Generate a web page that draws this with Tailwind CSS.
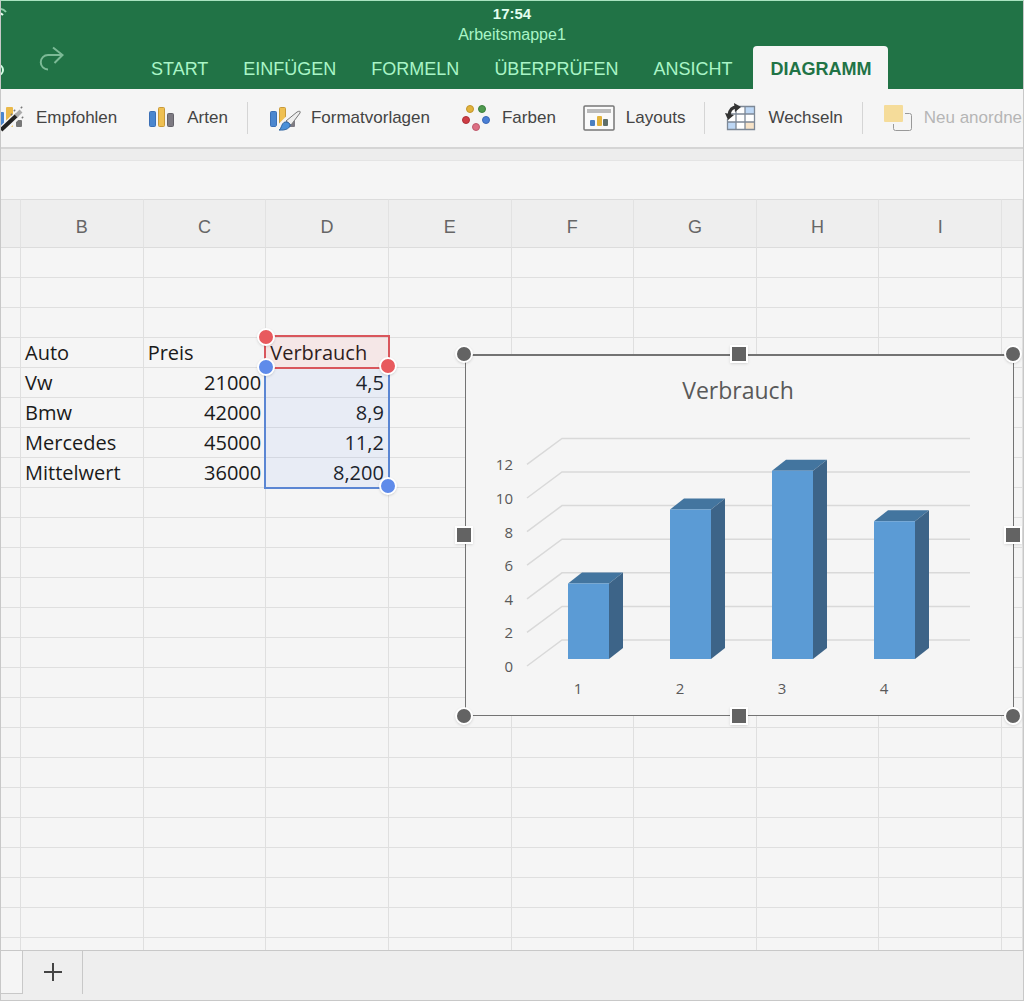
<!DOCTYPE html>
<html lang="de">
<head>
    <meta charset="UTF-8">
    <meta name="viewport" content="width=device-width, initial-scale=1.0">
    <title>Arbeitsmappe1</title>
    <script src="https://cdn.jsdelivr.net/npm/@tailwindcss/browser@4"></script>
</head>
<body class="flex h-screen flex-col overflow-hidden border border-t-[#a9e3c0] border-[#c8c8c8] bg-[#f5f5f5] font-['Liberation_Sans',Arial,sans-serif]">

  <header class="shrink-0 bg-[#217346] text-[#a9f5c6]">
    <div class="flex h-[45px]">
      <svg class="mt-1 h-4 w-3" viewBox="0 0 12 16" fill="none" stroke="#8fd0aa" stroke-width="2">
        <path d="M-5 5q6-3 10 2" />
        <path d="M-4 9q3-2 6 1" stroke="#e8fff0" />
      </svg>
      <div class="grow pt-1 pr-3 text-center">
        <p class="text-[15px] leading-[18px] font-bold text-[#e4fff0]">17:54</p>
        <h1 class="text-base leading-6">Arbeitsmappe1</h1>
      </div>
    </div>
    <div class="flex h-[43px]">
      <div class="flex w-[134px] shrink-0">
        <button type="button" class="w-9" aria-label="Rückgängig">
          <svg class="h-7 w-4" viewBox="0 0 16 28" fill="none" stroke="#d5ffe5" stroke-width="2"><path d="M-3 11a5 5 0 0 1 0 10" /></svg>
        </button>
        <button type="button" class="h-7" aria-label="Wiederholen">
          <svg class="h-7 w-7" viewBox="0 0 28 28" fill="none" stroke="#7cba96" stroke-width="2">
            <path d="M25 9H11a7 7 0 0 0 0 14.500" />
            <path d="M16 1.500l9.500 7.500-8 8" />
          </svg>
        </button>
      </div>
      <nav class="flex gap-[3px] text-lg leading-[46px]">
        <a href="#start" class="px-4">START</a>
        <a href="#einfuegen" class="px-4">EINFÜGEN</a>
        <a href="#formeln" class="px-4">FORMELN</a>
        <a href="#ueberpruefen" class="px-4">ÜBERPRÜFEN</a>
        <a href="#ansicht" class="px-4">ANSICHT</a>
        <a href="#diagramm" class="ml-0.5 rounded-t bg-[#f5f5f5] px-[17px] font-bold text-[#217346]">DIAGRAMM</a>
      </nav>
    </div>
  </header>

  <!-- ribbon -->
  <div class="flex h-[60px] shrink-0 items-center overflow-hidden border-b-2 border-[#d5d5d5] text-[17px] whitespace-nowrap text-[#444]">
    <button type="button" class="flex shrink-0 items-center gap-3">
      <svg class="h-8 w-[23px]" viewBox="0 0 23 32">
        <rect x="-3" y="10" width="6" height="15" rx="1" fill="#4a86cf" />
        <rect x="5" y="5" width="7" height="20" rx="1" fill="#eab94a" />
        <rect x="15" y="18" width="6" height="7" rx="1" fill="#777" />
        <path d="M-1 30L22 8" stroke="#f5f5f5" stroke-width="8" />
        <path d="M0 28L16 13" stroke="#222" stroke-width="4" />
        <path d="M15 14l5-5" stroke="#aaa" stroke-width="4" />
        <path d="M13 8l1 1M20 5l1 1M21 15l1 1M10 12l1 1" stroke="#777" stroke-width="2" />
      </svg>
      Empfohlen
    </button>
    <button type="button" class="ml-[30px] flex shrink-0 items-center gap-3">
      <svg class="h-8 w-7" viewBox="0 0 28 32" stroke-width="1">
        <rect x="2.500" y="9.500" width="6" height="15" rx="1" fill="#4a86cf" stroke="#3b6fb5" />
        <rect x="11.500" y="5.500" width="6" height="19" rx="1" fill="#efc052" stroke="#c99a3a" />
        <rect x="20.500" y="11.500" width="6" height="13" rx="1" fill="#7d7a82" stroke="#64626a" />
      </svg>
      Arten
    </button>
    <span class="mx-[19px] h-8 w-px shrink-0 bg-[#d5d5d5]"></span>
    <button type="button" class="flex shrink-0 items-center gap-[10px]">
      <svg class="h-8 w-[34px]" viewBox="0 0 34 32">
        <rect x="3.500" y="9.500" width="6" height="15" rx="1" fill="#4a86cf" stroke="#3b6fb5" />
        <rect x="12.500" y="5.500" width="6" height="19" rx="1" fill="#efc052" stroke="#c99a3a" />
        <rect x="22" y="12" width="6" height="13" rx="1" fill="#7d7a82" />
        <path d="M12 28L32 8" stroke="#f5f5f5" stroke-width="9" />
        <path d="M19 19L30 10q4-2 3 1L24 23z" fill="#eee" stroke="#777" />
        <path d="M12 28c3-1 2-9 8-8 6 2 3 9-8 8z" fill="#4a90d9" stroke="#2c62a0" />
      </svg>
      Formatvorlagen
    </button>
    <button type="button" class="ml-[30px] flex shrink-0 items-center gap-3">
      <svg class="h-8 w-[30px]" viewBox="0 0 30 32">
        <circle cx="10" cy="7" r="3.500" fill="#e2b33c" stroke="#c2952b" />
        <circle cx="22" cy="7" r="3.500" fill="#4f9a4f" stroke="#3c803c" />
        <circle cx="6" cy="18" r="3.500" fill="#cf3d45" stroke="#ad3038" />
        <circle cx="26" cy="18" r="3.500" fill="#4a7fd6" stroke="#3a68b5" />
        <circle cx="16" cy="25" r="3.500" fill="#dd6f83" stroke="#be5a6c" />
      </svg>
      Farben
    </button>
    <button type="button" class="ml-[26px] flex shrink-0 items-center gap-[10px]">
      <svg class="h-8 w-[34px]" viewBox="0 0 34 32">
        <rect x="2" y="4" width="30" height="24" rx="1" fill="#fafafa" stroke="#777" stroke-width="1.500" />
        <rect x="5" y="7" width="24" height="4" fill="#bbb" />
        <rect x="8" y="18" width="5" height="6" rx="1" fill="#4a7fc0" />
        <rect x="15" y="14" width="5" height="10" rx="1" fill="#e2b33c" />
        <rect x="21" y="17" width="5" height="7" rx="1" fill="#5f6f6a" />
      </svg>
      Layouts
    </button>
    <span class="mx-[19px] h-8 w-px shrink-0 bg-[#d5d5d5]"></span>
    <button type="button" class="flex shrink-0 items-center gap-3">
      <svg class="h-8 w-[32px]" viewBox="0 0 32 32">
        <rect x="3" y="4" width="28" height="24" fill="#fff" />
        <path d="M3 4h28v8H21v-8M3 20h9v8H3z" fill="#bdd7f5" />
        <path d="M21 20h10v8H21z" fill="#f7e3c8" />
        <path d="M3.500 4.500h27v23h-27zM3 12h28M3 20h28M12 4v24M21 4v24" fill="none" stroke="#7d8896" stroke-width="1.300" />
        <path d="M-1 1h12v4l-7 7v5h-5z" fill="#f5f5f5" />
        <path d="M5 13q1-8 8-8" fill="none" stroke="#333" stroke-width="3" />
        <path d="M10 1l7 4-6 5zM1 11l3 7 6-5z" fill="#333" />
      </svg>
      Wechseln
    </button>
    <span class="mx-[19px] h-8 w-px shrink-0 bg-[#d5d5d5]"></span>
    <button type="button" class="flex shrink-0 items-center gap-[10px] text-[#b5b5b5]" disabled>
      <svg class="h-8 w-8" viewBox="2 0 32 32">
        <rect x="13.500" y="11.500" width="18" height="17" rx="2" fill="none" stroke="#999" />
        <rect x="2" y="1" width="23" height="21" fill="#f5f5f5" />
        <rect x="4" y="3" width="19" height="17" rx="1" fill="#f5dc9a" />
      </svg>
      Neu anordnen
    </button>
  </div>

  <div class="h-3 shrink-0 border-b border-[#e4e4e4] bg-[#ededed]"></div>
  <div class="h-[38px] shrink-0"></div>

  <!-- sheet -->
  <main class="relative h-0 grow overflow-hidden">
    <table class="w-full table-fixed border-separate border-spacing-0 font-['Open_Sans','Noto_Sans',sans-serif] text-xl leading-[29px] text-[#1a1a1a]">
      <thead class="bg-[#eeeeee] font-['Liberation_Sans',Arial,sans-serif] text-lg text-[#666]">
        <tr id="columns"></tr>
      </thead>
      <tbody id="rows"></tbody>
    </table>

    <section class="absolute top-[155px] left-[464px] h-[362px] w-[549px] border border-t-2 border-[#737373] bg-[#f5f5f5]" aria-label="Diagramm Verbrauch">
      <svg class="h-full w-full font-['Open_Sans','Noto_Sans',sans-serif]" viewBox="0 0 547 359">
        <text x="272" y="43" text-anchor="middle" font-size="23" fill="#595959">Verbrauch</text>
        <g id="lines" fill="none" stroke="#d9d9d9" stroke-width="1.500"></g>
        <g id="bars"></g>
        <g id="labels" font-size="15" fill="#595959"></g>
      </svg>
      <div id="handles" class="absolute -top-0.5 right-0 -bottom-px -left-0.5"></div>
    </section>
  </main>

  <!-- sheet tabs -->
  <footer class="flex h-[50px] shrink-0 border-t border-[#c8c8c8] bg-[#eeeeee]">
    <div class="h-[43px] w-[22px] border-r border-b border-[#c8c8c8] bg-[#f5f5f5]"></div>
    <button type="button" class="flex h-[43px] w-[60px] items-center justify-center border-r border-[#c8c8c8]" aria-label="Neues Blatt">
      <svg class="h-5 w-5" viewBox="0 0 20 20" stroke="#444" stroke-width="2"><path d="M1 9h18M10 0v18" /></svg>
    </button>
  </footer>

  <script>
    const columns = ["", "B", "C", "D", "E", "F", "G", "H", "I", ""];
    const data = {
      3: ["Auto", "Preis", "Verbrauch"],
      4: ["Vw", "21000", "4,5"],
      5: ["Bmw", "42000", "8,9"],
      6: ["Mercedes", "45000", "11,2"],
      7: ["Mittelwert", "36000", "8,200"],
    };

    document.getElementById("columns").innerHTML = columns.map((name, i) => {
      const width = i === 0 ? "w-5" : i === 9 ? "w-[21px]" : "";
      return `<th class="h-[49px] border-t border-r border-b border-[#dcdcdc] border-r-[#e2e2e2] pt-1.5 pb-0 font-normal ${width}">${name}</th>`;
    }).join("");

    // marked ranges: series name in red, values in blue
    const redRange = `<div class="absolute -top-[3px] -left-[2px] -right-[2px] z-20 h-[34px] border-2 border-[#d9565c] bg-[#ff5050]/8">
      <i class="absolute -top-[9px] -left-[9px] size-[18px] rounded-full border-2 border-white bg-[#e85a5e] shadow"></i>
      <i class="absolute -right-[9px] -bottom-[8px] size-[18px] rounded-full border-2 border-white bg-[#e85a5e] shadow"></i></div>`;
    const blueRange = `<div class="absolute top-0 -left-[2px] -right-[2px] z-10 h-[121px] border-2 border-t-0 border-[#5b86d3] bg-[#4080ff]/7"></div>
      <i class="absolute -top-[10px] -left-[9px] z-30 size-[18px] rounded-full border-2 border-white bg-[#5f8bea] shadow"></i>
      <i class="absolute top-[109px] -right-[9px] z-30 size-[18px] rounded-full border-2 border-white bg-[#5f8bea] shadow"></i>`;

    let html = "";
    for (let r = 0; r < 60; r++) {
      html += "<tr>";
      for (let c = 0; c < 10; c++) {
        const text = data[r] && data[r][c - 1] ? data[r][c - 1] : "";
        const align = r > 3 && c > 1 ? "text-right" : "text-left";
        const marks = c === 3 && r === 3 ? redRange : c === 3 && r === 4 ? blueRange : "";
        html += `<td class="h-[30px] border-r border-b border-[#dfdfdf] px-1 py-0 ${align} ${marks ? "relative" : ""}">${text}${marks}</td>`;
      }
      html += "</tr>";
    }
    document.getElementById("rows").innerHTML = html;

    // 3D column chart
    let lines = "", labels = "", bars = "";
    for (let v = 0; v <= 12; v += 2) {
      const y = 284 - v * 16.8;
      lines += `<path d="M61 ${y + 26}L96 ${y}H504" />`;
      labels += `<text x="47" y="${y + 32}" text-anchor="end">${v}</text>`;
    }
    [4.5, 8.9, 11.2, 8.2].forEach((v, i) => {
      const x = 102 + i * 102;
      const y = 303 - v * 16.8;
      bars += `<path d="M${x} ${y}l14-11h41l-14 11z" fill="#43759f" />
        <path d="M${x + 41} ${y}l14-11V292l-14 11z" fill="#3d6488" />
        <path d="M${x} ${y}h41V303h-41z" fill="#5b9bd5" />`;
      labels += `<text x="${x + 10}" y="338" text-anchor="middle">${i + 1}</text>`;
    });
    document.getElementById("lines").innerHTML = lines;
    document.getElementById("bars").innerHTML = bars;
    document.getElementById("labels").innerHTML = labels;

    const places = [
      "left-0 top-0 rounded-full", "left-1/2 top-0", "left-full top-0 rounded-full",
      "left-0 top-1/2", "left-full top-1/2",
      "left-0 top-full rounded-full", "left-1/2 top-full", "left-full top-full rounded-full",
    ];
    document.getElementById("handles").innerHTML = places.map((place) =>
      `<i class="absolute size-[18px] -translate-1/2 border-2 border-white bg-[#636363] shadow ${place}"></i>`).join("");
  </script>
</body>
</html>
